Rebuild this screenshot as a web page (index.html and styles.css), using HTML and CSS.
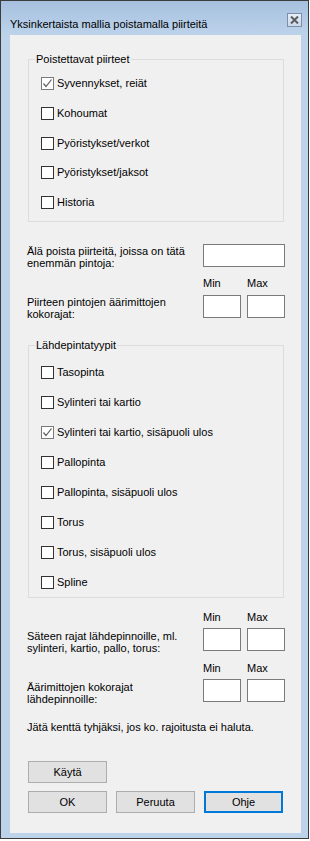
FILE: index.html
```html
<!DOCTYPE html>
<html lang="fi">
<head>
<meta charset="UTF-8">
<meta name="viewport" content="width=device-width, initial-scale=1.0">
<title>Yksinkertaista mallia poistamalla piirteitä</title>
<link rel="stylesheet" href="styles.css">
</head>
<body>
<div class="window">
    <div class="titlebar">
        <span class="title">Yksinkertaista mallia poistamalla piirteitä</span>
        <span class="close">
            <svg width="9" height="8" viewBox="0 0 9 8"><path d="M1 0.5 L8 7.5 M8 0.5 L1 7.5" stroke="#5b5b5b" stroke-width="2"/></svg>
        </span>
    </div>

    <div class="client">
        <fieldset class="group group-features">
            <legend>Poistettavat piirteet</legend>
            <div class="checks">
                <label class="check"><span class="box checked"><svg width="11" height="11" viewBox="0 0 11 11"><path d="M1.5 5.5 L4 8.5 L9.5 1.5" fill="none" stroke="#5e5e5e" stroke-width="1.2"/></svg></span>Syvennykset, reiät</label>
                <label class="check"><span class="box"></span>Kohoumat</label>
                <label class="check"><span class="box"></span>Pyöristykset/verkot</label>
                <label class="check"><span class="box"></span>Pyöristykset/jaksot</label>
                <label class="check"><span class="box"></span>Historia</label>
            </div>
        </fieldset>

        <div class="row row-count">
            <span class="lbl">Älä poista piirteitä, joissa on tätä<br>enemmän pintoja:</span>
            <input type="text" class="field wide">
        </div>

        <div class="minmax head-1"><span>Min</span><span>Max</span></div>
        <div class="row">
            <span class="lbl">Piirteen pintojen äärimittojen<br>kokorajat:</span>
            <div class="pair"><input type="text" class="field"><input type="text" class="field"></div>
        </div>

        <fieldset class="group group-surfaces">
            <legend>Lähdepintatyypit</legend>
            <div class="checks">
                <label class="check"><span class="box"></span>Tasopinta</label>
                <label class="check"><span class="box"></span>Sylinteri tai kartio</label>
                <label class="check"><span class="box checked"><svg width="11" height="11" viewBox="0 0 11 11"><path d="M1.5 5.5 L4 8.5 L9.5 1.5" fill="none" stroke="#5e5e5e" stroke-width="1.2"/></svg></span>Sylinteri tai kartio, sisäpuoli ulos</label>
                <label class="check"><span class="box"></span>Pallopinta</label>
                <label class="check"><span class="box"></span>Pallopinta, sisäpuoli ulos</label>
                <label class="check"><span class="box"></span>Torus</label>
                <label class="check"><span class="box"></span>Torus, sisäpuoli ulos</label>
                <label class="check"><span class="box"></span>Spline</label>
            </div>
        </fieldset>

        <div class="minmax head-2"><span>Min</span><span>Max</span></div>
        <div class="row">
            <span class="lbl lbl-low">Säteen rajat lähdepinnoille, ml.<br>sylinteri, kartio, pallo, torus:</span>
            <div class="pair"><input type="text" class="field"><input type="text" class="field"></div>
        </div>

        <div class="minmax head-3"><span>Min</span><span>Max</span></div>
        <div class="row">
            <span class="lbl lbl-low">Äärimittojen kokorajat<br>lähdepinnoille:</span>
            <div class="pair"><input type="text" class="field"><input type="text" class="field"></div>
        </div>

        <p class="note">Jätä kenttä tyhjäksi, jos ko. rajoitusta ei haluta.</p>

        <div class="buttons">
            <button class="btn">Käytä</button>
        </div>
        <div class="buttons buttons-main">
            <button class="btn">OK</button>
            <button class="btn">Peruuta</button>
            <button class="btn btn-focus">Ohje</button>
        </div>
    </div>
</div>
</body>
</html>
```

FILE: styles.css
```css
body {
    margin: 0;
    padding: 0;
    background-color: #ffffff;
    font-family: "Liberation Sans", Arial, sans-serif;
    font-size: 11px;
    color: #000000;
}

.window {
    width: 309px;
    height: 839px;
    box-sizing: border-box;
    border: 1px solid #3c3c3c;
    background-color: #bcd3ea;
    padding: 0 7px 5px 9px;
    display: flex;
    flex-direction: column;
}

.titlebar {
    height: 34px;
    flex-shrink: 0;
    margin: 0 -7px 0 -9px;
    padding: 0 6px 0 9px;
    background: linear-gradient(#a6c0de, #bcd3ea);
    display: flex;
    justify-content: space-between;
    align-items: flex-start;
}

.title {
    margin-top: 15px;
    font-size: 11px;
    line-height: 16px;
    color: #000000;
}

.close {
    margin-top: 12px;
    width: 15px;
    height: 14px;
    box-sizing: border-box;
    border: 1px solid #7d8ea6;
    background: linear-gradient(#e6eef8, #c9d8ea);
    display: flex;
    align-items: center;
    justify-content: center;
}

.client {
    flex: 1;
    background-color: #f0f0f0;
    padding: 0 16px 0 17px;
}

/* group boxes */
.group {
    margin: 0 0 0 1px;
    padding: 0;
    width: 256px;
    box-sizing: border-box;
    border: 1px solid #dcdcdc;
}

.group legend {
    margin-left: 6px;
    padding: 0 1px;
    line-height: 13px;
}

.group-features {
    margin-top: 18px;
}

.group-surfaces {
    margin-top: 21px;
}

.checks {
    display: flex;
    flex-direction: column;
    gap: 16.75px;
    padding: 11px 0 12px 12px;
}

.group-surfaces .checks {
    gap: 17px;
    padding: 14px 0 8px 12px;
}

.check {
    display: flex;
    align-items: center;
    height: 13px;
    line-height: 13px;
}

.box {
    width: 13px;
    height: 13px;
    box-sizing: border-box;
    border: 1px solid #333333;
    background-color: #ffffff;
    margin-right: 3px;
    display: flex;
    align-items: center;
    justify-content: center;
}

.box.checked {
    border-color: #7a7a7a;
}

/* label + inputs rows */
.row {
    display: flex;
    justify-content: space-between;
    align-items: flex-start;
    height: 23px;
}

.row-count {
    margin-top: 22px;
}

.lbl {
    line-height: 12px;
    padding-top: 1px;
}

.lbl-low {
    padding-top: 2px;
}

.field {
    width: 38px;
    height: 23px;
    box-sizing: border-box;
    border: 1px solid #7a7a7a;
    background-color: #ffffff;
    padding: 0;
    margin: 0;
}

.field.wide {
    width: 82px;
}

.pair {
    display: flex;
    gap: 6px;
}

.minmax {
    display: grid;
    grid-template-columns: 38px 38px;
    column-gap: 6px;
    justify-content: end;
    line-height: 13px;
    margin-bottom: 5px;
}

.head-1 {
    margin-top: 10px;
}

.head-2 {
    margin-top: 13px;
    margin-bottom: 4px;
}

.head-3 {
    margin-top: 11px;
    margin-bottom: 4px;
}

.note {
    margin: 19px 0 0 0;
    line-height: 13px;
}

/* buttons */
.buttons {
    display: flex;
    gap: 9px;
    margin: 27px 0 0 1px;
}

.buttons-main {
    margin-top: 8px;
}

.btn {
    width: 79px;
    height: 22px;
    box-sizing: border-box;
    border: 1px solid #adadad;
    background-color: #e1e1e1;
    font-family: "Liberation Sans", Arial, sans-serif;
    font-size: 11px;
    color: #000000;
    padding: 0;
    margin: 0;
}

.btn-focus {
    border: 2px solid #0078d7;
}
```
